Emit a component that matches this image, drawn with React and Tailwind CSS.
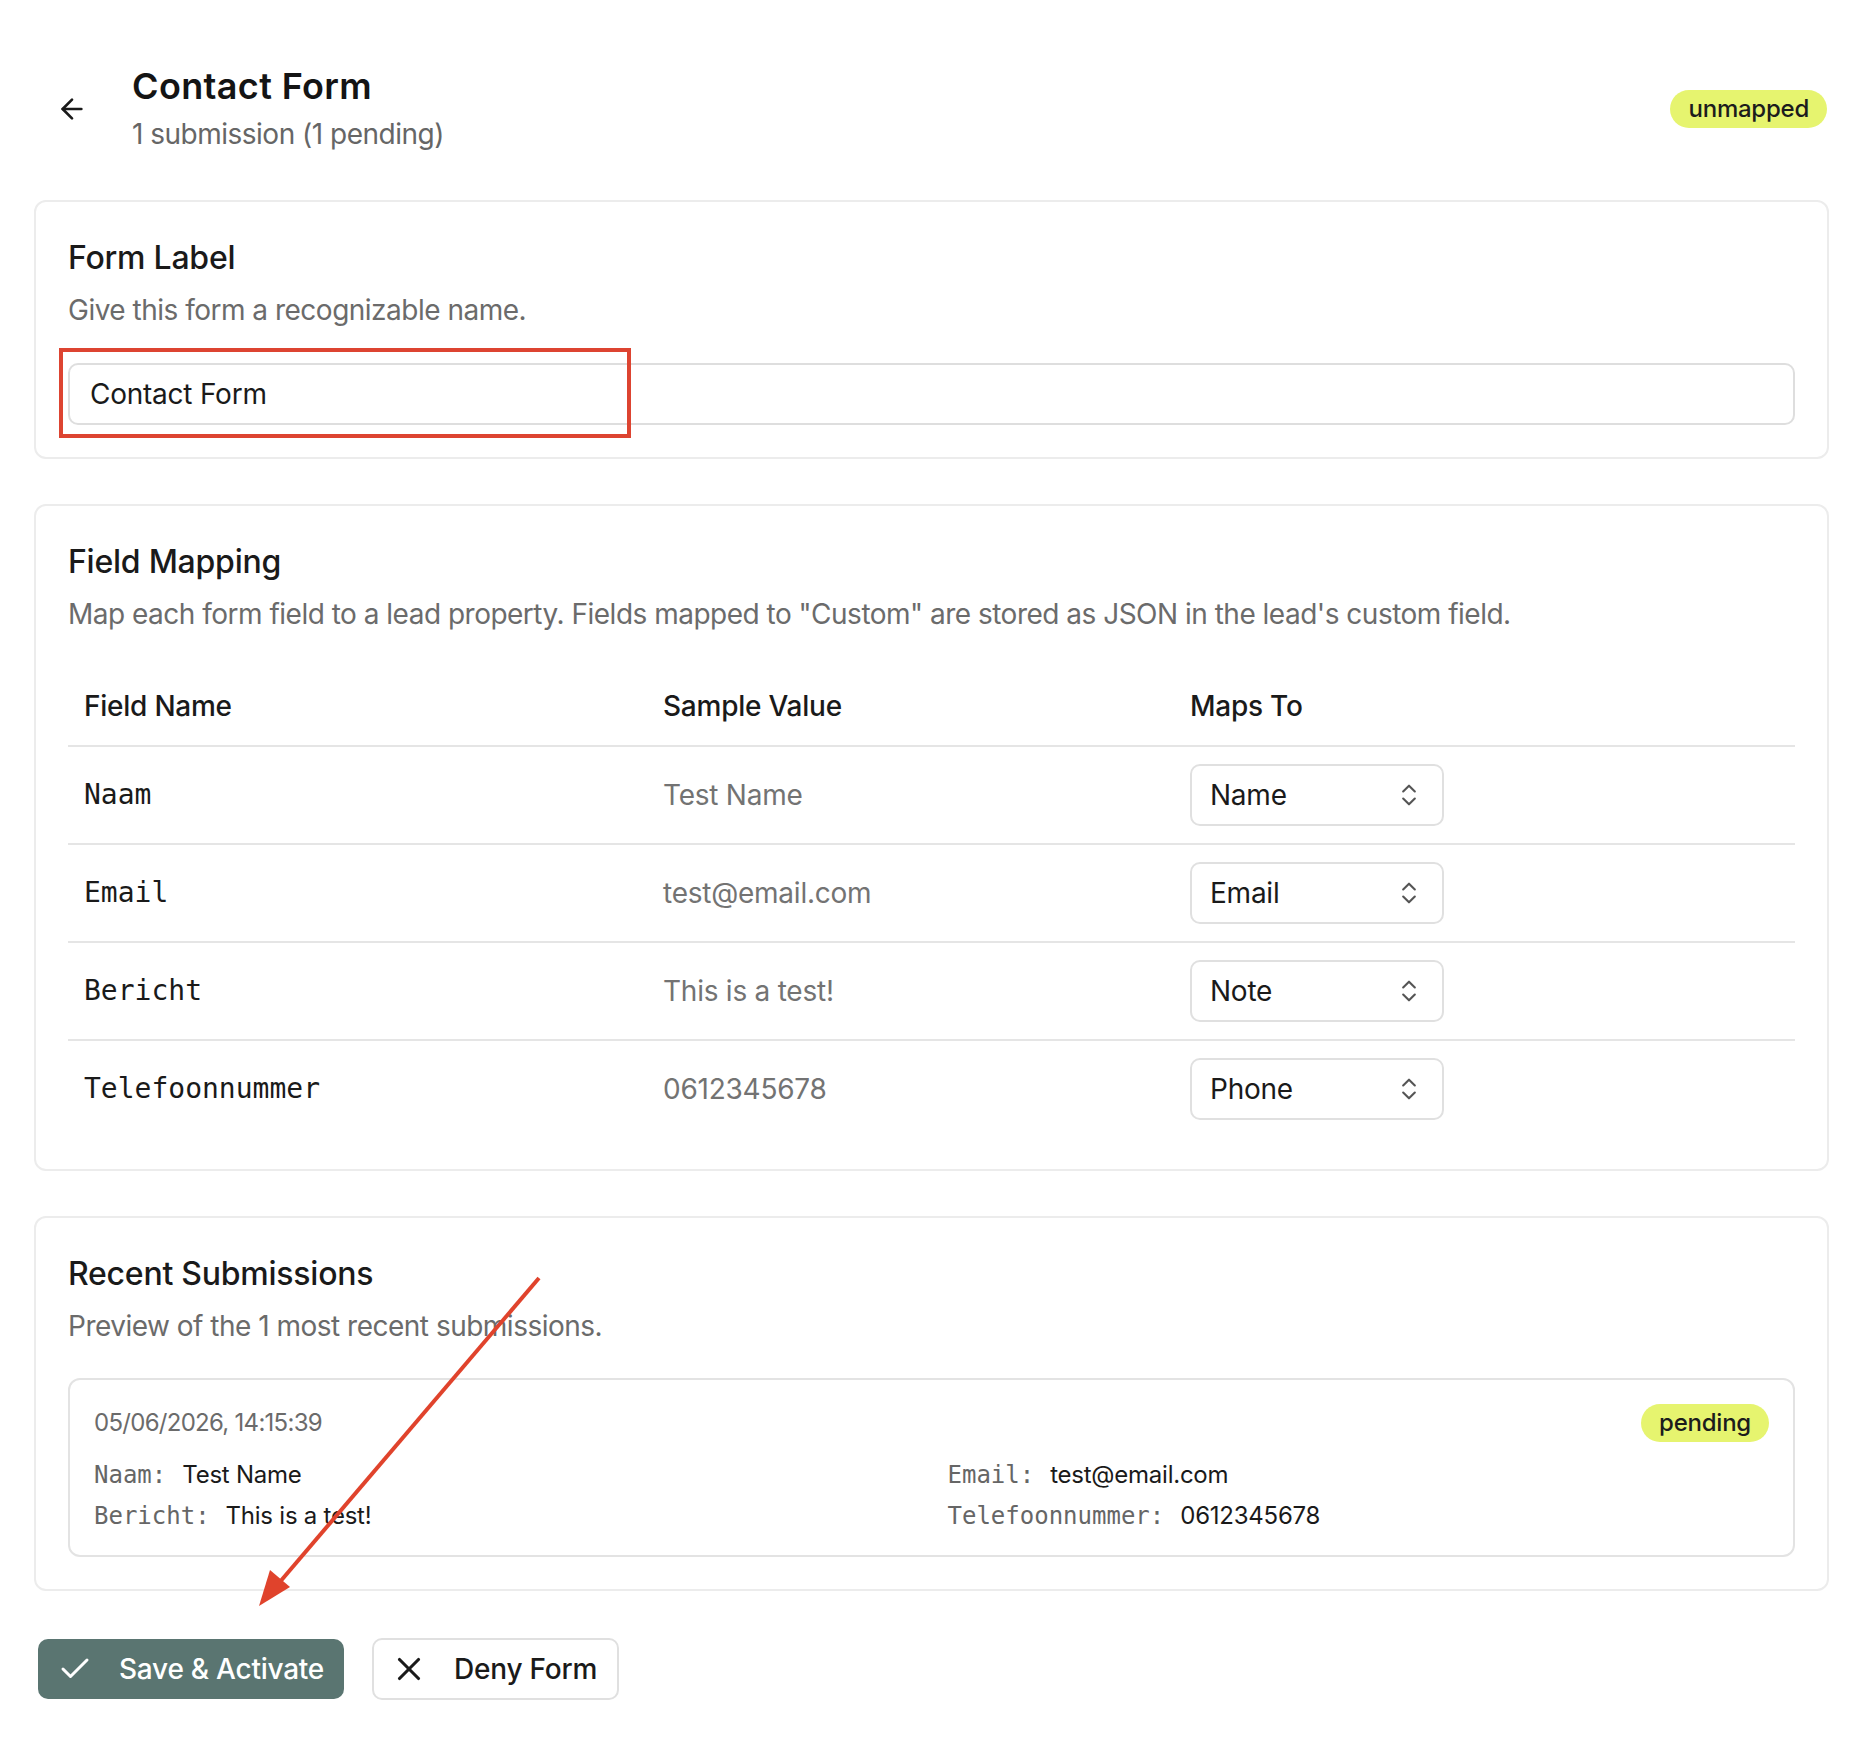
import React, { useState } from 'react';
import { ArrowLeft, Check, X, ChevronsUpDown } from 'lucide-react';

const fields = [
    { name: 'Naam', sample: 'Test Name', mapsTo: 'Name' },
    { name: 'Email', sample: 'test@email.com', mapsTo: 'Email' },
    { name: 'Bericht', sample: 'This is a test!', mapsTo: 'Note' },
    { name: 'Telefoonnummer', sample: '0612345678', mapsTo: 'Phone' },
];

const mono = "font-['DejaVu_Sans_Mono',monospace] tracking-normal";

const Badge = ({ children }) => (
    <span className="inline-flex items-center h-[38px] px-[18px] rounded-full bg-[#e6f46f] text-[24px] font-medium text-[#1c1c1c]">
        {children}
    </span>
);

const Card = ({ title, description, children }) => (
    <section className="relative rounded-xl border-2 border-[#ececec] bg-white px-[32px] pt-[33px] pb-[32px]">
        <h2 className="text-[32px] leading-[46px] font-medium text-[#1a1a1a]">{title}</h2>
        <p className="mt-[9px] text-[28px] leading-[40px] tracking-[-0.018em] text-[#6b6b6b]">{description}</p>
        {children}
    </section>
);

const MappingSelect = ({ value }) => (
    <div className="flex items-center justify-between h-[62px] w-[254px] rounded-[10px] border-2 border-[#e0e0e0] pl-[18px] pr-[19px] text-[28px] text-[#1a1a1a]">
        <span>{value}</span>
        <ChevronsUpDown size={28} strokeWidth={1.8} className="text-[#555]" />
    </div>
);

const App = () => {
    const [label, setLabel] = useState('Contact Form');

    return (
        <div className="relative min-h-screen bg-white pl-[34px] pr-[31px] pt-[64px] pb-[58px] font-['Inter',sans-serif] tracking-[-0.015em] text-[#1a1a1a]">
            <header className="flex items-center justify-between">
                <div className="flex items-center">
                    <button className="ml-[16px] flex h-[44px] w-[44px] items-center justify-center text-[#1a1a1a]">
                        <ArrowLeft size={32} strokeWidth={2} />
                    </button>
                    <div className="ml-[38px]">
                        <h1 className="text-[36px] leading-[44px] font-semibold tracking-[0.01em] text-[#141414]">Contact Form</h1>
                        <p className="mt-[6px] text-[28px] leading-[40px] tracking-[-0.018em] text-[#666]">1 submission (1 pending)</p>
                    </div>
                </div>
                <div className="mr-[2px]">
                    <Badge>unmapped</Badge>
                </div>
            </header>

            <div className="mt-[46px] flex flex-col gap-[45px]">
                <Card title="Form Label" description="Give this form a recognizable name.">
                    <input
                        value={label}
                        onChange={(e) => setLabel(e.target.value)}
                        className="mt-[33px] block h-[62px] w-full rounded-[10px] border-2 border-[#dedede] px-[20px] text-[28px] text-[#1a1a1a] outline-none"
                    />
                    {/* highlight around the label input */}
                    <div className="pointer-events-none absolute left-[23px] top-[146px] h-[90px] w-[572px] border-[4px] border-[#dd4431]"></div>
                </Card>

                <Card
                    title="Field Mapping"
                    description={'Map each form field to a lead property. Fields mapped to "Custom" are stored as JSON in the lead\'s custom field.'}
                >
                    <div className="mt-[33px]">
                        <div className="grid h-[80px] grid-cols-[579px_527px_1fr] items-center border-b-2 border-[#e5e5e5] text-[28px] font-medium text-[#1a1a1a]">
                            <div className="px-[16px]">Field Name</div>
                            <div className="px-[16px]">Sample Value</div>
                            <div className="px-[16px]">Maps To</div>
                        </div>
                        {fields.map((field, i) => (
                            <div
                                key={field.name}
                                className={`grid grid-cols-[579px_527px_1fr] items-center ${i < fields.length - 1 ? 'h-[98px] border-b-2 border-[#e5e5e5]' : 'h-[96px]'}`}
                            >
                                <div className={`px-[16px] text-[28px] text-[#1a1a1a] ${mono}`}>{field.name}</div>
                                <div className="px-[16px] text-[28px] text-[#737373]">{field.sample}</div>
                                <div className="px-[16px]">
                                    <MappingSelect value={field.mapsTo} />
                                </div>
                            </div>
                        ))}
                    </div>
                </Card>

                <Card title="Recent Submissions" description="Preview of the 1 most recent submissions.">
                    <div className="mt-[32px] rounded-xl border-2 border-[#e3e3e3] px-[24px] pt-[23px] pb-[19px]">
                        <div className="flex h-[40px] items-center justify-between">
                            <span className="text-[24px] tracking-[-0.03em] text-[#6b6b6b]">05/06/2026, 14:15:39</span>
                            <Badge>pending</Badge>
                        </div>
                        <div className="mt-[12px] grid grid-cols-2 gap-x-[32px] gap-y-[1px] text-[24px] leading-[40px]">
                            <div className="flex gap-[16px]">
                                <span className={`${mono} text-[#666]`}>Naam:</span>
                                <span>Test Name</span>
                            </div>
                            <div className="flex gap-[16px]">
                                <span className={`${mono} text-[#666]`}>Email:</span>
                                <span>test@email.com</span>
                            </div>
                            <div className="flex gap-[16px]">
                                <span className={`${mono} text-[#666]`}>Bericht:</span>
                                <span>This is a test!</span>
                            </div>
                            <div className="flex gap-[16px]">
                                <span className={`${mono} text-[#666]`}>Telefoonnummer:</span>
                                <span>0612345678</span>
                            </div>
                        </div>
                    </div>
                </Card>
            </div>

            <div className="mt-[47px] flex items-center">
                <button className="ml-[4px] flex h-[60px] items-center gap-[26px] rounded-[10px] bg-[#5a7571] pl-[19px] pr-[20px] text-[28px] font-medium text-white">
                    <Check size={36} strokeWidth={2} />
                    <span>Save &amp; Activate</span>
                </button>
                <button className="ml-[28px] flex h-[62px] items-center gap-[26px] rounded-[10px] border-2 border-[#e0e0e0] bg-white pl-[16px] pr-[20px] text-[28px] font-medium text-[#1a1a1a]">
                    <X size={38} strokeWidth={2} />
                    <span>Deny Form</span>
                </button>
            </div>

            {/* red pointer arrow towards the save button */}
            <svg
                className="pointer-events-none absolute left-[250px] top-[1270px]"
                width="300"
                height="345"
                viewBox="250 1270 300 345"
            >
                <line x1="539" y1="1278" x2="279" y2="1583" stroke="#e0432c" strokeWidth="4" />
                <polygon points="259,1606 290,1587 270,1570" fill="#e0432c" />
            </svg>
        </div>
    );
};

export default App;
